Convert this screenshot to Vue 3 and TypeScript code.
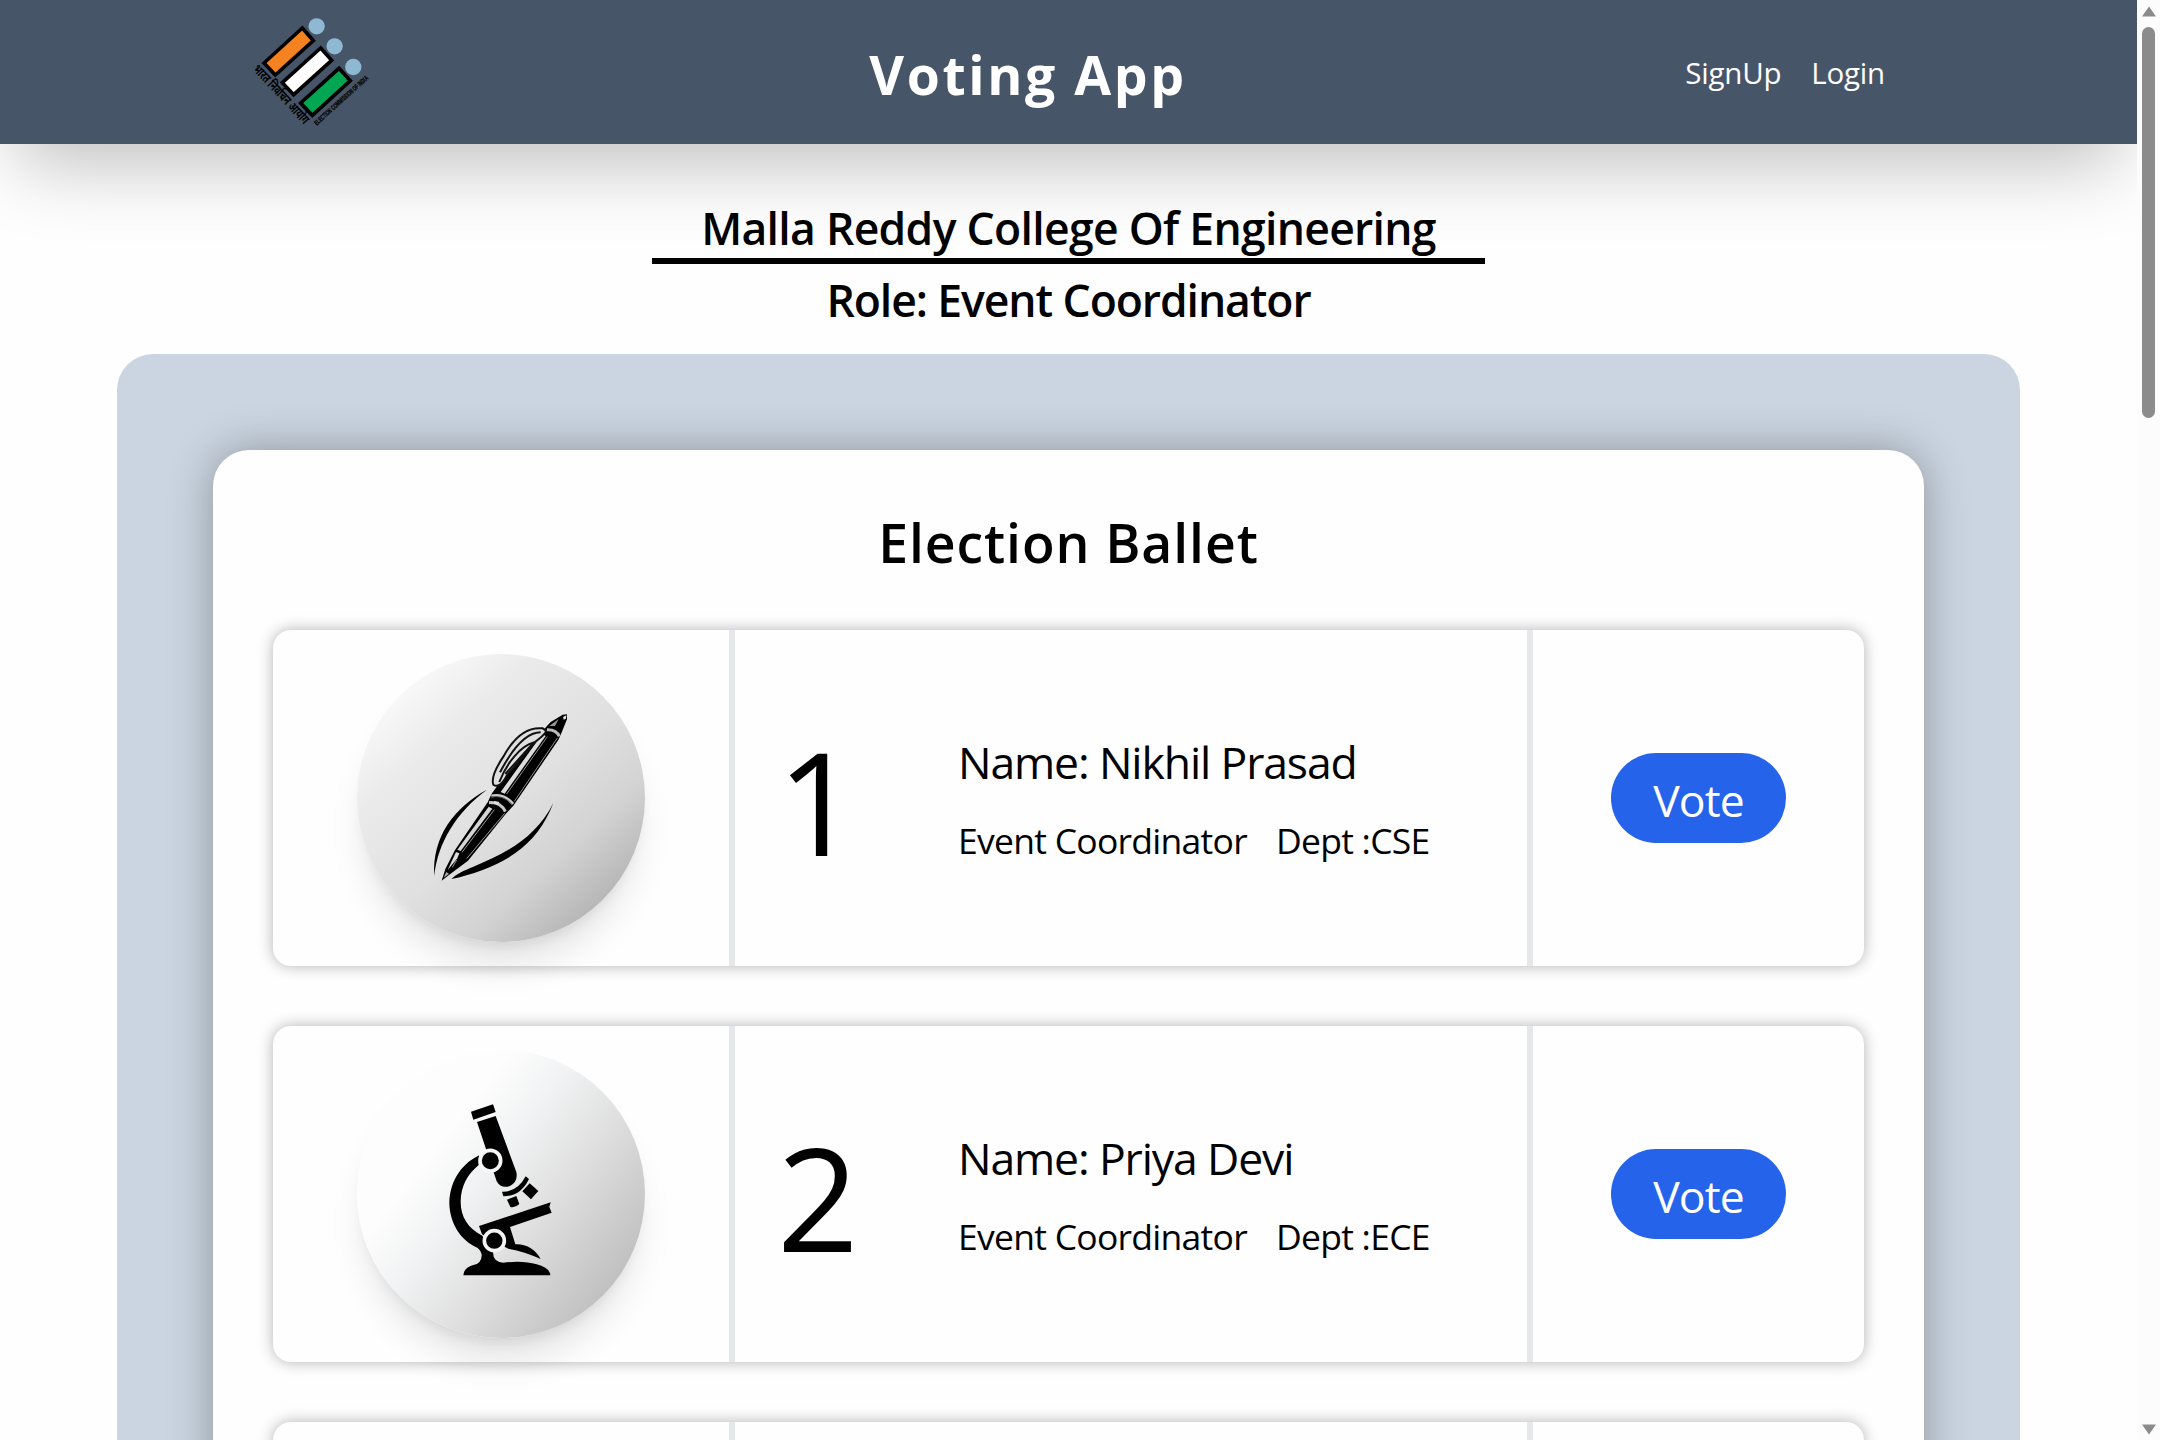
<script setup lang="ts">
interface Candidate {
  id: number
  name: string
  dept: string
  symbol: 'pen' | 'microscope' | 'none'
}

const candidates: Candidate[] = [
  { id: 1, name: 'Nikhil Prasad', dept: 'CSE', symbol: 'pen' },
  { id: 2, name: 'Priya Devi', dept: 'ECE', symbol: 'microscope' },
  { id: 3, name: '', dept: '', symbol: 'none' },
]
</script>

<template>
  <div class="screen">
    <div class="page">
      <header class="header">
        <svg class="logo" viewBox="30 15 430 390">
          <g stroke="#000" stroke-width="11">
            <path d="M217 84 L250 122 L136 225 L102 189 Z" fill="#f58220" />
            <path d="M272 144 L305 181 L191 284 L157 248 Z" fill="#fff" />
            <path d="M327 205 L361 242 L247 346 L212 309 Z" fill="#00a651" />
          </g>
          <g fill="#8fb9d2">
            <circle cx="260" cy="79" r="24.5" />
            <circle cx="314" cy="139" r="24.5" />
            <circle cx="370" cy="201" r="24.5" />
          </g>
          <text class="logo-hi" transform="translate(67 209) rotate(47)" textLength="226" lengthAdjust="spacingAndGlyphs">भारत निर्वाचन आयोग</text>
          <text class="logo-en" transform="translate(260 377) rotate(-42)" textLength="210" lengthAdjust="spacingAndGlyphs">ELECTION COMMISSION OF INDIA</text>
        </svg>
        <h1 class="brand">Voting App</h1>
        <nav class="nav">
          <a>SignUp</a>
          <a>Login</a>
        </nav>
      </header>

      <section class="heading">
        <h2 class="college">Malla Reddy College Of Engineering</h2>
        <h2 class="role">Role: Event Coordinator</h2>
      </section>

      <main class="panel">
        <div class="ballot">
          <h2 class="ballot-title">Election Ballet</h2>
          <div v-for="c in candidates" :key="c.id" class="card">
            <div class="cell symbol-cell">
              <div v-if="c.symbol !== 'none'" class="symbol" :class="c.symbol">
                <svg v-if="c.symbol === 'pen'" viewBox="51 42 864 864">
                  <path d="M441 449 C345 500 275 590 283 708 C292 610 350 515 441 449 Z" />
                  <path d="M640 489 C590 590 500 640 400 680 C370 692 350 702 334 717 C400 704 475 676 525 640 C578 602 615 555 640 489 Z" />
                  <path d="M305 722 L316 687 L345 630 L443 487 L455 461 L476 432 L612 268 L632 246 L668 224 L681 223 L681 238 L664 280 L655 300 L520 497 L497 522 L384 662 L326 706 Z" />
                  <path d="M311 713 L319 696 L327 702 Z" fill="#aaa" />
                  <path d="M323 690 L348 636 L358 640 L352 655 Z" fill="#ddd" />
                  <path d="M352 629 L446 500 L457 506 L362 633 Z" fill="#d5d5d5" />
                  <path d="M366 637 L463 509 M350 660 L337 682 M380 656 L494 520" stroke="#bbb" stroke-width="2.5" fill="none" />
                  <path d="M482 456 L607 282 L617 288 L494 461 Z" fill="#ddd" />
                  <path d="M500 462 L622 290 M523 484 L652 294" stroke="#aaa" stroke-width="2.5" fill="none" />
                  <path d="M454 468 Q493 461 519 492 M447 488 Q482 486 496 515" stroke="#c8c8c8" stroke-width="9" fill="none" />
                  <path d="M454 470 Q493 465 517 494" stroke="#222" stroke-width="2" fill="none" />
                  <path d="M463 483 L478 486 L475 494 L460 490 Z" fill="#ddd" />
                  <path d="M621 269 Q649 268 658 289" stroke="#bbb" stroke-width="9" fill="none" />
                  <path d="M628 258 L656 237 L645 258 Z" fill="#999" />
                  <path d="M669 231 L679 226 L678 236 L671 239 Z" fill="#ddd" />
                  <path d="M608 265 C560 260 520 295 490 350 C470 380 453 415 460 434 C470 442 485 437 500 407 L584 307 C604 290 618 282 618 272 Z" fill="#dedede" stroke="#111" stroke-width="6" />
                  <path d="M583 307 C540 318 500 370 478 426 M602 277 C555 277 510 340 480 397 M578 311 L496 402" stroke="#111" stroke-width="6" fill="none" />
                </svg>
                <svg v-else viewBox="51 59 864 864">
                  <path d="M393 244 L459 222 L467 245 L400 268 Z" />
                  <path d="M411 275 L467 257 L529 425 Q535 453 510 467 Q483 476 470 453 L440 362 Z" />
                  <path d="M418 375 C355 405 328 465 328 520 C330 580 362 630 412 652 Q425 662 425 676 Q424 700 400 704 Q371 712 370 735 L631 735 Q630 713 590 702 Q550 690 490 697 Q458 695 459 664 L427 616 C385 595 362 560 362 515 C362 465 385 430 416 404 Z" />
                  <path d="M417 587 L632 516 L628 530 L635 547 L510 590 L526 642 Q575 640 602 686 Q555 664 505 655 L426 612 Z" />
                  <circle cx="451" cy="391" r="31" stroke="#f6f6f6" stroke-width="11" />
                  <circle cx="463" cy="631" r="30" stroke="#f3f3f3" stroke-width="11" />
                  <path d="M486 484 Q532 486 557 438 L567 446 Q542 498 490 498 Z" />
                  <path d="M547 483 L569 459 L595 482 L573 507 Z" />
                  <path d="M501 508 L529 497 L538 521 Q525 534 511 530 Z" />
                </svg>
              </div>
            </div>
            <div class="cell info-cell">
              <template v-if="c.name">
                <span class="number">{{ c.id }}</span>
                <div class="info">
                  <p class="name">Name: {{ c.name }}</p>
                  <p class="meta"><span>Event Coordinator</span><span>Dept :{{ c.dept }}</span></p>
                </div>
              </template>
            </div>
            <div class="cell vote-cell">
              <button v-if="c.name" class="vote">Vote</button>
            </div>
          </div>
        </div>
      </main>
    </div>

    <aside class="scrollbar">
      <svg viewBox="0 0 14 11"><path d="M7 0.5 L14 10.5 H0 Z" /></svg>
      <div class="thumb"></div>
      <svg viewBox="0 0 14 11"><path d="M7 10.5 L14 0.5 H0 Z" /></svg>
    </aside>
  </div>
</template>

<style>
body {
  overflow: hidden;
}
</style>

<style scoped>
* {
  box-sizing: border-box;
}
h1,
h2,
p {
  margin: 0;
}
.screen {
  display: flex;
  width: 2160px;
  height: 1440px;
  overflow: hidden;
  background: #fefefe;
  color: #000;
  font-family: 'Open Sans', 'Noto Sans', sans-serif;
}
.page {
  width: 2137px;
  height: 1440px;
  overflow: hidden;
}
.header {
  display: flex;
  align-items: center;
  height: 144px;
  padding: 0 252px 0 240px;
  background: #475569;
  color: #fff;
  box-shadow: 0 37.5px 75px -18px rgba(0, 0, 0, 0.25);
}
.logo {
  width: 143.3px;
  height: 130px;
  margin-top: -4px;
  overflow: visible;
}
.logo-hi {
  font: 700 40px 'Noto Sans Devanagari', 'Noto Sans', sans-serif;
}
.logo-en {
  font: 700 21px 'Liberation Sans', sans-serif;
  stroke: #000;
  stroke-width: 0.8px;
}
.brand {
  margin-left: 486px;
  padding-top: 5px;
  font-size: 53.5px;
  font-weight: 700;
  line-height: 60px;
  letter-spacing: 2.6px;
  white-space: nowrap;
}
.nav {
  display: flex;
  gap: 30px;
  margin-left: auto;
  padding-top: 2px;
  font-size: 29.5px;
  line-height: 36px;
  letter-spacing: -0.2px;
}
.heading {
  display: flex;
  flex-direction: column;
  align-items: center;
  height: 210px;
  padding-top: 54px;
  font-size: 44.5px;
}
.college,
.role {
  font-size: inherit;
  font-weight: 600;
  line-height: 60px;
  white-space: nowrap;
}
.college {
  width: 833px;
  height: 66px;
  text-align: center;
  letter-spacing: -0.7px;
  border-bottom: 6px solid #000;
}
.role {
  margin-top: 6px;
  letter-spacing: -1.08px;
}
.panel {
  width: 1903px;
  height: 1600px;
  margin-left: 117px;
  padding: 96px;
  border-radius: 36px;
  background: #cbd5e1;
}
.ballot {
  height: 1500px;
  padding: 60px;
  border-radius: 36px;
  background: #fefefe;
  box-shadow: 0 0 45px rgba(0, 0, 0, 0.3);
}
.ballot-title {
  height: 120px;
  font-size: 53.5px;
  font-weight: 600;
  line-height: 66px;
  letter-spacing: 0.9px;
  text-align: center;
}
.card {
  display: flex;
  height: 336px;
  margin-bottom: 60px;
  border-radius: 18px;
  background: #fefefe;
  box-shadow: 0 0 15px rgba(0, 0, 0, 0.3);
}
.cell {
  display: flex;
  align-items: center;
}
.symbol-cell {
  width: 462px;
  padding-left: 84px;
  border-right: 6px solid #e5e7eb;
}
.info-cell {
  width: 798px;
  border-right: 6px solid #e5e7eb;
}
.vote-cell {
  flex: 1;
  padding-left: 78px;
}
.symbol {
  width: 288px;
  height: 288px;
  border-radius: 50%;
  box-shadow: 0 30px 37.5px -7.5px rgba(0, 0, 0, 0.1), 0 12px 15px -9px rgba(0, 0, 0, 0.1);
}
.symbol svg {
  display: block;
  width: 288px;
  height: 288px;
}
.pen {
  background: linear-gradient(138deg, #fafafb 12%, #ebebec 29%, #e0e0e0 53%, #d3d3d3 70%, #b2b2b2 88%);
}
.microscope {
  background: linear-gradient(128deg, #fdfdfd 30%, #f1f2f3 44%, #dedede 62%, #c0c0c0 86%);
}
.number {
  width: 144px;
  padding: 5px 0 0 42px;
  font-size: 143px;
  line-height: 144px;
}
.info {
  margin-left: 79px;
  white-space: nowrap;
}
.name {
  font-size: 44.5px;
  line-height: 60px;
  letter-spacing: -1.12px;
}
.meta {
  display: flex;
  gap: 29px;
  margin-top: 24px;
  font-size: 35.5px;
  line-height: 48px;
  letter-spacing: -0.73px;
}
.vote {
  width: 175px;
  height: 90px;
  padding: 4px 0 0;
  border: 0;
  border-radius: 45px;
  background: #2563eb;
  color: #fff;
  font-family: inherit;
  font-size: 44.5px;
  line-height: 60px;
  letter-spacing: -0.9px;
}
.scrollbar {
  display: flex;
  flex-direction: column;
  align-items: center;
  width: 23px;
  padding: 6px 0 5px;
  background: #fcfcfc;
}
.scrollbar svg {
  width: 14px;
  height: 11px;
  fill: #8b8b8b;
}
.thumb {
  width: 13px;
  height: 391px;
  margin: 10px 0 auto;
  border-radius: 7px;
  background: #8b8b8b;
}
</style>
